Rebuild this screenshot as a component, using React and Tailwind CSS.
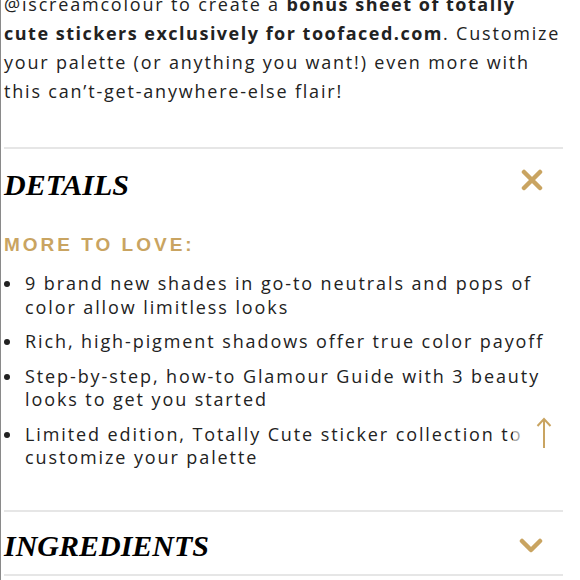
import React from 'react';

const bullets = [
  ['9 brand new shades in go-to neutrals and pops of', 'color allow limitless looks'],
  ['Rich, high-pigment shadows offer true color payoff'],
  ['Step-by-step, how-to Glamour Guide with 3 beauty', 'looks to get you started'],
  ['Limited edition, Totally Cute sticker collection to', 'customize your palette'],
];

function CloseIcon() {
  return (
    <svg width="22" height="22" viewBox="0 0 22 22" fill="none">
      <path d="M3 3L19 19M19 3L3 19" stroke="#c9a461" strokeWidth="4.5" strokeLinecap="round" />
    </svg>
  );
}

function ChevronIcon() {
  return (
    <svg width="24" height="16" viewBox="0 0 24 16" fill="none">
      <path d="M3 3L12 12L21 3" stroke="#c9a461" strokeWidth="4.5" strokeLinecap="round" strokeLinejoin="round" />
    </svg>
  );
}

export default function App() {
  return (
    <div className="relative h-[580px] w-[580px] overflow-hidden bg-white border-l border-[#8a8a8a] font-['Open_Sans',sans-serif] text-[#222]">
      <div className="w-[562px] pl-[3px] -mt-[10px]">
        {/* Intro copy */}
        <p className="text-[18px] leading-[29px] tracking-[1.8px] pb-[41px] whitespace-nowrap">
          <span className="block">@iscreamcolour to create a <b className="tracking-[1.5px]">bonus sheet of totally</b></span>
          <span className="block"><b className="tracking-[1.5px]">cute stickers exclusively for toofaced.com</b>. Customize</span>
          <span className="block">your palette (or anything you want!) even more with</span>
          <span className="block">this can’t-get-anywhere-else flair!</span>
        </p>

        {/* Details */}
        <div className="border-t-2 border-[#e6e6e6]">
          <div className="flex items-center justify-between h-[70px] pr-[20px]">
            <h2 className="font-['Liberation_Serif',serif] italic font-bold text-[30px] text-black">DETAILS</h2>
            <span className="-mt-[8px]"><CloseIcon /></span>
          </div>
          <h3 className="font-['Liberation_Sans',sans-serif] font-bold text-[19px] tracking-[3px] text-[#c9a461] leading-[28px] mt-[12px]">
            MORE TO LOVE:
          </h3>
          <ul className="mt-[13px] pb-[40px] flex flex-col gap-[11px]">
            {bullets.map((b) => (
              <li key={b[0]} className="flex text-[18px] leading-[23.5px] tracking-[1.9px] whitespace-nowrap">
                <span className="w-[21px] shrink-0 flex items-start pt-[9px]">
                  <span className="block w-[6px] h-[6px] rounded-full bg-[#222]" />
                </span>
                <span>
                  {b.map((line) => (
                    <span key={line} className="block">{line}</span>
                  ))}
                </span>
              </li>
            ))}
          </ul>
        </div>

        {/* Ingredients */}
        <div className="border-t-2 border-b-2 border-[#e6e6e6]">
          <div className="flex items-center justify-between h-[62px] pt-[6px] pr-[20px]">
            <h2 className="font-['Liberation_Serif',serif] italic font-bold text-[30px] text-black">INGREDIENTS</h2>
            <ChevronIcon />
          </div>
        </div>
      </div>

      {/* Back to top */}
      <button className="absolute left-[512px] top-[403px] w-[62px] h-[60px] bg-white/60 flex items-center justify-center">
        <svg width="16" height="32" viewBox="0 0 16 32" fill="none">
          <path d="M8 2V31M1.5 9L8 2L14.5 9" stroke="#c9a461" strokeWidth="2" />
        </svg>
      </button>
    </div>
  );
}
